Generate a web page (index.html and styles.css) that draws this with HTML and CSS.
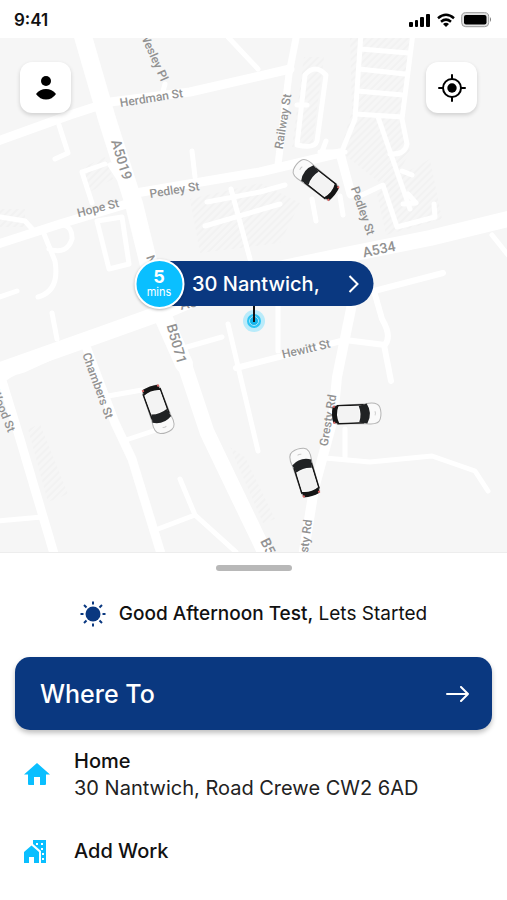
FILE: index.html
```html
<!DOCTYPE html>
<html lang="en">
	<head>
		<meta charset="UTF-8" />
		<meta name="viewport" content="width=device-width, initial-scale=1" />
		<title>Book a ride</title>
		<link rel="stylesheet" href="styles.css">
	</head>
	<body>
		<header class="status-bar">
			<span class="time">9:41</span>
			<div class="status-icons">
				<svg width="22" height="14" viewBox="0 0 22 14">
					<rect x="0" y="9" width="4" height="5" rx="1" />
					<rect x="6" y="7" width="3" height="7" rx="1" />
					<rect x="11" y="4" width="4" height="10" rx="1" />
					<rect x="17" y="1" width="4" height="13" rx="1" />
				</svg>
				<svg width="20" height="14" viewBox="0 0 20 14">
					<path d="M2 5.2Q10-1.6 18 5.2M5 8.7q5-4.2 10 0" fill="none" stroke="#000" stroke-width="2.5" />
					<path d="M7 11q3-2.4 6 0l-3 3z" />
				</svg>
				<svg width="31" height="16" viewBox="0 0 31 16">
					<rect x=".7" y=".7" width="27" height="14" rx="4" fill="#e4e4e4" stroke="#999" />
					<rect x="3" y="3" width="22.500" height="9.500" rx="2" />
					<path d="M29 5q2 2.500 0 5z" fill="#777" />
				</svg>
			</div>
		</header>

		<main class="map">
			<svg class="map-canvas" viewBox="0 38 507 516" preserveAspectRatio="xMidYMid slice">
				<defs>
					<pattern id="hatch" width="5" height="5" patternUnits="userSpaceOnUse" patternTransform="rotate(45)">
						<path d="M1 0v5" stroke="#eeeeee" />
					</pattern>
					<g id="car">
						<path d="M-10-10Q-12-22-6-24 0-26 6-24 12-22 10-10L9 20Q9 23 6 23L-6 23Q-9 23-9 20z" fill="#fafafa" stroke="#b4b4b4" />
						<path d="M-9-8v27M9-8v27" stroke="#161616" stroke-width="1.5" />
						<path d="M-10-11Q0-17 10-11L8-3Q0-6-8-3z" fill="#202224" />
						<path d="M-9 17Q0 21 9 17L8 23Q0 25-8 23z" fill="#151515" />
						<path d="M-8-2Q0-5 8-2V17Q0 19-8 17z" fill="#f3f3f3" />
						<path d="M-9 22h2M7 22h2" stroke="#d66" stroke-width="2" />
						<path d="M-2-19q2-1 4 0" fill="none" stroke="#ccc" />
					</g>
				</defs>

				<rect y="38" width="507" height="516" fill="#f6f6f6" />

				<g fill="url(#hatch)">
					<path d="M304 58h20l-12 90h-20zM350 38h62l-10 84 8 30-20 40-50-40 12-40z" />
					<path d="M190 200l70-16 40 20-20 40-80 10zM376 190l54-30 12 60-56 16z" />
					<path d="M80 170l25-12 8 22-25 14zM0 210h25v18H0z" />
					<path d="M28 430l12-5 28 70-20 8zM230 448l15 10 30 62-12 4z" />
				</g>

				<g class="roads">
					<path d="M82 34L107 120 134 205 148 262 164 320 184 365" stroke-width="18" />
					<path d="M180 352L207 433 218 456 268 560" stroke-width="15" />
					<path d="M-5 373L105 334 158 315 250 276 350 255 430 239 512 219" stroke-width="16" />
					<path d="M-5 143L70 116 110 103 190 93 290 70" stroke-width="9" />
					<path d="M-5 246L60 225 130 204M130 195L260 173 340 154 351 195" stroke-width="9" />
					<path d="M297 34L289 75 278 166" stroke-width="7" />
					<path d="M352 305L337 378 333 420 314 490 303 558" stroke-width="10" />
					<path d="M84 342L115 424 132 460 162 558" stroke-width="9" />
					<path d="M0 375L20 440 55 558" stroke-width="9" />
					<path d="M-5 390Q5 375 24 371L85 343" stroke-width="5" />
					<path d="M361 34L355 120 340 157M413 34L402 120 407 145Q405 156 390 155M361 50L408 54M359 70L405 75M357 92L403 96M355 115L402 118M378 118L410 210" stroke-width="5" />
					<path d="M305 76Q315 64 326 76L317 142Q315 150 297 146zM326 142L320 158M320 153h25M297 106h10" stroke-width="5" />
					<path d="M228 38L258 70M165 85L162 96M59 126L68 154 55 160M192 152L195 178M82 173L105 165M82 173L92 204M110 166L123 186" stroke-width="5" />
					<path d="M42 230L55 262Q60 292 38 298M42 230Q73 218 72 240 67 256 49 250M0 218L25 222 35 233M52 314L57 340M0 298L17 292" stroke-width="5" />
					<path d="M97 222L122 218 129 265 109 270z" stroke-width="5" />
					<path d="M207 203L260 193 285 186M205 227L280 205M231 190L250 260M228 325L258 452M180 350L222 338M312 200L316 222M340 197L343 216M362 196L383 186 397 228 435 218 434 205M408 195L416 204 403 205M402 172L412 176" stroke-width="5" />
					<path d="M236 369L345 341 385 346Q392 337 382 320L374 292 443 274M384 346L391 382" stroke-width="6" />
					<path d="M278 300L278 352" stroke-width="5" />
					<path d="M325 459L370 463 432 457 475 472 488 492M345 430V460M158 530L195 516 236 553M180 480L195 516M126 441L156 431M108 397L142 391M-2 522L42 518M492 236L508 256" stroke-width="5" />
				</g>

				<g class="labels">
					<text x="161" y="83" transform="rotate(66 161 83)" text-anchor="end">Wesley Pl</text>
					<text x="152" y="103" transform="rotate(-9 152 103)">Herdman St</text>
					<text x="117" y="162" transform="rotate(73 117 162)" class="route">A5019</text>
					<text x="175" y="195" transform="rotate(-9 175 195)">Pedley St</text>
					<text x="99" y="213" transform="rotate(-14 99 213)">Hope St</text>
					<text x="287" y="123" transform="rotate(-81 287 123)">Railway St</text>
					<text x="359" y="213" transform="rotate(71 359 213)">Pedley St</text>
					<text x="380" y="255" transform="rotate(-12 380 255)" class="route">A534</text>
					<text x="172" y="346" transform="rotate(74 172 346)" class="route">B5071</text>
					<text x="146" y="258" transform="rotate(70 146 258)" text-anchor="start">Nant</text>
					<text x="181" y="311" transform="rotate(-13 181 311)" text-anchor="start" class="route">A5</text>
					<text x="307" y="354" transform="rotate(-13 307 354)">Hewitt St</text>
					<text x="94" y="388" transform="rotate(70 94 388)">Chambers St</text>
					<text x="8" y="434" transform="rotate(68 8 434)" text-anchor="end">Wood St</text>
					<text x="332" y="422" transform="rotate(-80 332 422)">Gresty Rd</text>
					<text x="312" y="521" transform="rotate(-83 312 521)" text-anchor="end">Gresty Rd</text>
					<text x="260" y="542" transform="rotate(64 260 542)" text-anchor="start" class="route">B5071</text>
				</g>

				<use href="#car" transform="translate(316 181) rotate(-52)" />
				<use href="#car" transform="translate(158 410) rotate(160)" />
				<use href="#car" transform="translate(356 415) rotate(88)" />
				<use href="#car" transform="translate(305 474) rotate(-17)" />

				<circle cx="254" cy="322" r="11" fill="#b9ebfa" />
				<circle cx="254" cy="322" r="7" fill="#2cc4f4" />
				<circle cx="254" cy="322" r="4.500" fill="#12b4ea" stroke="#a5e6fa" />
				<path d="M254 305v18" stroke="#111" stroke-width="2" />
			</svg>

			<div class="map-buttons">
				<button class="map-button" aria-label="Profile">
					<svg width="20" height="24" viewBox="0 0 20 24">
						<circle cx="10" cy="5" r="5" />
						<path d="M0 18Q4 13 10 13T20 18Q16 23.500 10 23.500T0 18z" />
					</svg>
				</button>
				<button class="map-button" aria-label="My location">
					<svg width="28" height="28" viewBox="0 0 28 28">
						<circle cx="14" cy="14" r="9" fill="none" stroke="#000" stroke-width="2" />
						<circle cx="14" cy="14" r="4.700" />
						<path d="M14 1v4M14 23v4M1 14h4M23 14h4" stroke="#000" stroke-width="2" stroke-linecap="round" />
					</svg>
				</button>
			</div>

			<button class="pickup">
				<span class="eta"><b>5</b><small>mins</small></span>
				<span class="pickup-address">30 Nantwich,</span>
				<svg width="12" height="20" viewBox="0 0 12 20">
					<path d="M2 2l8 8-8 8" fill="none" stroke="#fff" stroke-width="2" />
				</svg>
			</button>
		</main>

		<section class="sheet">
			<div class="handle"></div>
			<p class="greeting">
				<svg width="26" height="26" viewBox="0 0 26 26">
					<circle cx="13" cy="13" r="7.500" fill="#0a3880" />
					<path d="M13 .5v3M13 22.500v3M.5 13h3M22.500 13h3M4 4l2.500 2.500M19.500 19.500L22 22M22 4l-2.500 2.500M6.500 19.500L4 22" stroke="#0a3880" stroke-width="2" />
				</svg>
				<span><strong>Good Afternoon Test,</strong> Lets Started</span>
			</p>
			<button class="where-to">
				Where To
				<svg width="24" height="16" viewBox="0 0 24 16">
					<path d="M1 8h21M15 1l7 7-7 7" fill="none" stroke="#fff" stroke-width="2" stroke-linecap="round" stroke-linejoin="round" />
				</svg>
			</button>
			<ul class="places">
				<li>
					<a href="#home">
						<svg width="26" height="26" viewBox="0 0 26 26" fill="#0abfff">
							<path d="M13 1L0 12.500h4V22q0 1 1 1h5v-8h6v8h5q1 0 1-1v-9.500h4z" />
						</svg>
						<span><strong>Home</strong>30 Nantwich, Road Crewe CW2 6AD</span>
					</a>
				</li>
				<li>
					<a href="#work">
						<svg width="26" height="26" viewBox="0 0 26 26" fill="#0abfff">
							<path d="M0 13L7.500 6.500 15 13v11h-5v-6H5v6H0z" />
							<path d="M9 1h13v23h-5V12L9 5z" />
							<path d="M12 4h2v2h-2zM17 4h2v2h-2zM17 9h2v2h-2zM18 14h2v2h-2zM18 19h2v2h-2z" fill="#fff" />
						</svg>
						<span><strong>Add Work</strong></span>
					</a>
				</li>
			</ul>
		</section>
	</body>
</html>
```

FILE: styles.css
```css
* {
	box-sizing: border-box;
}
body {
	margin: 0;
	min-height: 100vh;
	display: flex;
	flex-direction: column;
	background: #fff;
	color: #111;
	font-family: Inter, "Liberation Sans", sans-serif;
}
button {
	border: 0;
	font: inherit;
	cursor: pointer;
}
svg {
	display: block;
	flex: none;
}
.status-bar {
	height: 38px;
	padding: 2px 15px 0 14px;
	display: flex;
	align-items: center;
	justify-content: space-between;
}
.time {
	font-size: 17px;
	font-weight: 600;
}
.status-icons {
	display: flex;
	align-items: center;
	gap: 5px;
}

.map {
	position: relative;
	flex: 1;
	min-height: 420px;
	background: #f6f6f6;
	overflow: hidden;
}
.map-canvas {
	position: absolute;
	width: 100%;
	height: 100%;
}
.roads path {
	fill: none;
	stroke: #fff;
	stroke-linejoin: round;
	stroke-linecap: round;
}
.labels {
	font-family: Roboto, sans-serif;
	font-size: 12px;
	font-weight: 500;
	fill: #929292;
	text-anchor: middle;
}
.labels .route {
	font-size: 14px;
}
.map-buttons {
	position: relative;
	display: flex;
	justify-content: space-between;
	padding: 24px 30px 0 20px;
}
.map-button {
	width: 51px;
	height: 51px;
	padding: 0;
	display: grid;
	place-items: center;
	background: #fff;
	border-radius: 12px;
	box-shadow: 0 2px 4px rgba(0, 0, 0, 0.16);
}

/* pickup label hangs over the pin in the middle of the map */
.pickup {
	position: absolute;
	left: 50%;
	top: calc(50% - 34px);
	transform: translateX(-50%);
	width: 239px;
	height: 45px;
	padding: 0 14px 0 0;
	display: flex;
	align-items: center;
	background: linear-gradient(90deg, transparent 25px, #0a3880 25px);
	border-radius: 23px;
	color: #fff;
}
.eta {
	width: 50px;
	height: 50px;
	flex: none;
	display: flex;
	flex-direction: column;
	align-items: center;
	justify-content: center;
	background: #0abfff;
	border: 2px solid #fff;
	border-radius: 50%;
	box-shadow: 0 1px 3px rgba(0, 0, 0, 0.3);
}
.eta b {
	font-size: 18px;
	line-height: 18px;
}
.eta small {
	font-size: 11px;
	line-height: 13px;
}
.pickup-address {
	flex: 1;
	padding-left: 8px;
	text-align: left;
	white-space: nowrap;
	font-size: 20px;
	font-weight: 500;
}

.sheet {
	padding: 12px 15px 35px;
	border-top: 1px solid #ededed;
}
.handle {
	width: 76px;
	height: 6px;
	margin: 0 auto;
	background: #b8b8b8;
	border-radius: 3px;
}
.greeting {
	margin: 30px 0;
	display: flex;
	align-items: center;
	justify-content: center;
	gap: 13px;
	font-size: 19px;
	line-height: 26px;
}
strong {
	font-weight: 500;
}
.where-to {
	width: 100%;
	height: 73px;
	padding: 0 22px 0 25px;
	display: flex;
	align-items: center;
	justify-content: space-between;
	background: #0a3880;
	border-radius: 15px;
	box-shadow: 0 3px 5px rgba(0, 0, 0, 0.25);
	color: #fff;
	font-size: 25px;
	font-weight: 500;
}
.places {
	list-style: none;
	margin: 18px 0 0;
	padding: 0 9px;
	display: grid;
	gap: 36px;
}
.places a {
	display: flex;
	align-items: center;
	gap: 24px;
	color: #222;
	text-decoration: none;
	font-size: 20px;
	line-height: 27px;
}
.places strong {
	display: block;
	color: #111;
}
```
